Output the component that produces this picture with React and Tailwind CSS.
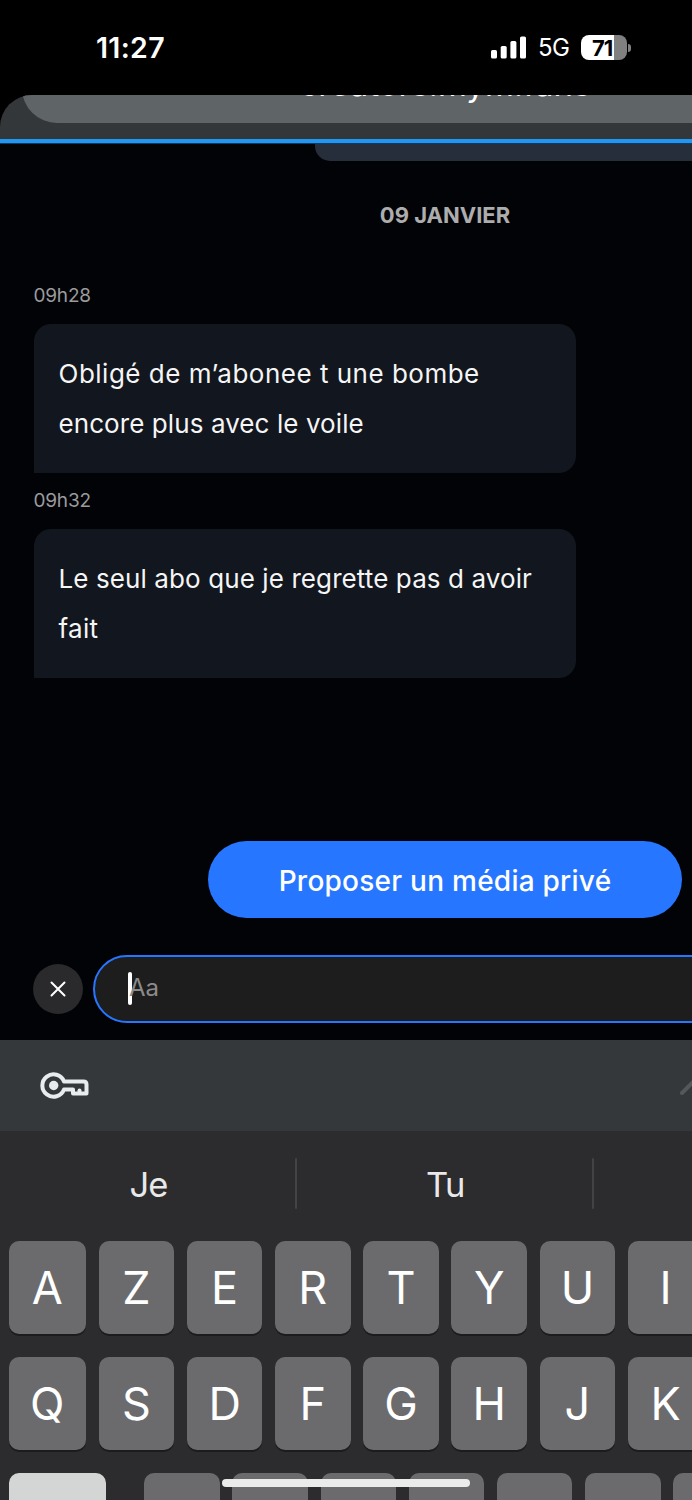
import React from "react";

const rows = [
  ["A", "Z", "E", "R", "T", "Y", "U", "I", "O", "P"],
  ["Q", "S", "D", "F", "G", "H", "J", "K", "L", "M"],
];

const messages = [
  {
    time: "09h28",
    lines: [
      { text: "Obligé de m’abonee t une bombe", style: "tracking-[0.5px]" },
      { text: "encore plus avec le voile", style: "tracking-[0.08px]" },
    ],
  },
  {
    time: "09h32",
    lines: [
      { text: "Le seul abo que je regrette pas d avoir", style: "tracking-[0.1px]" },
      { text: "fait", style: "tracking-[0.3px]" },
    ],
  },
];

function StatusBar() {
  return (
    <div className="flex h-[95px] w-[692px] shrink-0 items-center bg-black pl-[96px] text-white">
      <span className="w-[70px] pt-[2px] text-[28.5px] leading-none font-semibold tracking-[0.3px]">11:27</span>
      <svg className="ml-[325px]" width="36" height="24" viewBox="0 0 36 24" fill="#fff">
        <rect x="0" y="14" width="6" height="8.5" rx="1.6" />
        <rect x="9.7" y="10" width="6" height="12.5" rx="1.6" />
        <rect x="19.4" y="5" width="6" height="17.5" rx="1.6" />
        <rect x="29" y="0.5" width="6" height="22" rx="1.6" />
      </svg>
      <span className="ml-[11px] w-[32px] text-[24px] leading-none tracking-[-0.5px]">5G</span>
      <div className="ml-[11px] flex items-center">
        <div className="flex h-[25px] w-[46px] items-center rounded-[8px] bg-linear-to-r from-white from-72% to-[#808080] to-72% pl-[11px]">
          <span className="text-[22px] leading-none font-bold tracking-[-1px] text-black">71</span>
        </div>
        <div className="ml-[1px] h-[8px] w-[3px] rounded-r-full bg-[#808080]" />
      </div>
    </div>
  );
}

function AddressBar() {
  return (
    <div className="bg-black">
      <div className="flex h-[44px] items-end overflow-hidden rounded-tl-[32px] bg-[#343739] px-[22px] pb-4">
        <div className="flex h-[70px] w-full shrink-0 items-center justify-center rounded-full bg-[#5f6467] pb-[8px]">
          <span className="text-[33px] leading-none text-white">creators.mym.fans</span>
        </div>
      </div>
    </div>
  );
}

function Message({ time, lines }) {
  return (
    <div>
      <p className="h-[34px] pt-[1px] text-[19px] leading-[20px] tracking-[-0.2px] text-[#9b9b9c]">{time}</p>
      <div className="mt-[5px] h-[149px] w-[542px] rounded-[17px] rounded-bl-none bg-[#12161e] px-[25px] pt-[25px] text-[26px] leading-[49.5px] text-[#f5f5f5]">
        {lines.map((line) => (
          <p key={line.text} className="whitespace-nowrap">
            <span className={line.style}>{line.text}</span>
          </p>
        ))}
      </div>
    </div>
  );
}

function Chat() {
  return (
    <div className="h-[896px] bg-[#020307]">
      <div className="ml-[315px] h-[17px] rounded-bl-[15px] bg-[#272e3b]" />
      <p className="mt-[44px] text-center text-[22px] leading-[20px] font-bold text-[#adadad]">09 JANVIER</p>
      <div className="mt-[60px] flex flex-col gap-[17px] pl-[33.5px]">
        {messages.map((m) => (
          <Message key={m.time} {...m} />
        ))}
      </div>
      <div className="mt-[163px] flex justify-center">
        <button className="h-[77px] w-[474px] rounded-full bg-[#2776ff] pt-[2px] text-[28px] font-medium text-white">
          <span className="tracking-[0.25px]">Proposer un média privé</span>
        </button>
      </div>
      <div className="mt-[37px] flex items-center pl-[33px]">
        <button className="flex size-[50px] items-center justify-center rounded-full bg-[#2a2a2c]">
          <svg width="16" height="16" viewBox="0 0 16 16" stroke="#fff" strokeWidth="2" strokeLinecap="round">
            <path d="M1.5 1.5l13 13M14.5 1.5l-13 13" />
          </svg>
        </button>
        <div className="ml-[10px] flex h-[68px] w-[770px] items-center rounded-full border-2 border-[#2776ff] bg-[#1d1d1d] pb-[2px] pl-[33px]">
          <span className="h-[33px] w-[4px] rounded-full bg-white" />
          <span className="-ml-[3px] text-[24px] leading-none text-[#8b8b8b]">Aa</span>
        </div>
      </div>
    </div>
  );
}

function Accessory() {
  return (
    <div className="flex h-[91px] items-center justify-between bg-[#34383b] pr-[160px] pl-[40px]">
      <svg width="50" height="28" viewBox="0 0 50 28" fill="none" stroke="#e8ecef" strokeWidth="4" strokeLinejoin="round">
        <path d="M24 9.5H43.5Q46.5 9.5 46.5 12.5V21.5H33V17.5H24A11.2 11.2 0 1 1 24 9.5Z" />
        <circle cx="13.7" cy="13.5" r="4.7" fill="#e8ecef" stroke="none" />
        <path d="M39.5 21V18.5" strokeLinecap="round" />
      </svg>
      <svg width="50" height="18" viewBox="0 0 50 18" fill="none" stroke="#55585a" strokeWidth="4" strokeLinecap="round">
        <path d="M2 16L16 2L30 16" />
      </svg>
    </div>
  );
}

function Key({ label, first }) {
  return (
    <div
      className={`flex h-[92.5px] shrink-0 items-center justify-center rounded-[10px] bg-[#6b6b6d] text-[45px] leading-none text-white shadow-[0_2px_0_#1c1c1e] ${
        first ? "w-[77.5px]" : "w-[75.5px]"
      }`}
    >
      {label}
    </div>
  );
}

function Keyboard() {
  return (
    <div className="h-[369px] bg-[#2c2c2e]">
      <div className="flex h-[110px] items-center pb-[5px] text-[34.5px] tracking-[-0.9px] text-[#e9e9ea]">
        <span className="w-[295px] pt-[2px] pl-[2px] text-center">Je</span>
        <span className="h-[51px] w-[2px] rounded-full bg-[#434345]" />
        <span className="w-[294.5px] pt-[2px] pl-[2px] text-center">Tu</span>
        <span className="h-[51px] w-[2px] rounded-full bg-[#434345]" />
      </div>
      <div className="flex flex-col gap-[23.5px] pl-[8.5px]">
        {rows.map((row) => (
          <div key={row[0]} className="flex gap-[12.7px]">
            {row.map((k, i) => (
              <Key key={k} label={k} first={i === 0} />
            ))}
          </div>
        ))}
        <div className="flex gap-[12.7px]">
          <div className="mr-[25.5px] h-[92.5px] w-[97.5px] shrink-0 rounded-[10px] bg-[#d4d5d5]" />
          {[0, 1, 2, 3, 4, 5, 6].map((n) => (
            <Key key={n} />
          ))}
        </div>
      </div>
    </div>
  );
}

export default function App() {
  return (
    <div className="relative h-[1500px] w-[692px] overflow-hidden bg-black font-['Inter',sans-serif]">
      <div className="w-[890px]">
        <StatusBar />
        <AddressBar />
        <div className="h-[5px] border-b border-[#123a5e] bg-[#2196f3]" />
        <Chat />
        <Accessory />
        <Keyboard />
      </div>
      <div className="absolute bottom-[13px] left-[222px] h-[8px] w-[248px] rounded-full bg-[#ebebeb]" />
    </div>
  );
}
